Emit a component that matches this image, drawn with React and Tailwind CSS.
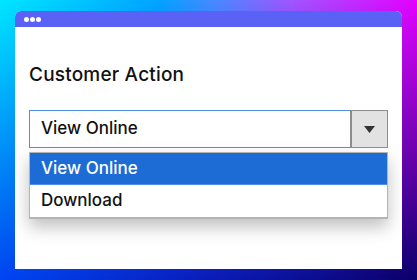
import React from 'react'

const font = { fontFamily: 'Inter, "Noto Sans", sans-serif' }

export default function App() {
  return (
    <div className="relative h-[280px] w-[417px] overflow-hidden bg-[linear-gradient(to_right,#0044f2,#0a1fc0_45%,#0b006a)]" style={font}>
      {/* top half of the backdrop colours */}
      <div className="absolute inset-0 bg-[linear-gradient(to_right,#00e6ff,#00a4ff_38%,#4a88ff_52%,#a055ff_70%,#e400ff)] [mask-image:linear-gradient(to_bottom,black_0%,rgba(0,0,0,0.55)_45%,transparent_100%)]" />

      <div className="relative px-[15px] pt-[11px]">
        <div className="flex h-[258px] flex-col bg-white rounded-t-[6px] overflow-hidden">
          {/* title bar */}
          <div className="flex h-[16px] items-center gap-[1px] bg-[#5a62f6] pl-[9px]">
            <span className="h-[5px] w-[5px] rounded-full bg-white" />
            <span className="h-[5px] w-[5px] rounded-full bg-white" />
            <span className="h-[5px] w-[5px] rounded-full bg-white" />
          </div>

          <div className="px-[14px] pt-[36px]">
            <h1 className="text-[19px] leading-[24px] font-medium text-[#111] tracking-[0.2px]">Customer Action</h1>

            {/* select */}
            <div className="mt-[23px] flex h-[38px]">
              <div className="flex flex-1 items-center border border-r-0 border-[#4a8fe3] pl-[11px] text-[17px] font-medium text-[#111]">
                View Online
              </div>
              <div className="flex w-[38px] items-center justify-center border border-l-2 border-[#8c8c8c] bg-[#e2e2e2]">
                <svg width="11" height="7" viewBox="0 0 11 7"><path d="M0 0h11L5.5 7z" fill="#333" /></svg>
              </div>
            </div>

            {/* options */}
            <div className="mt-[4px] border border-b-2 border-[#b4b4b4] shadow-[0_8px_16px_rgba(0,0,0,0.25)]">
              <div className="flex h-[32px] items-center border-b border-[#4f8fe8] bg-[#1d6bd5] pl-[11px] text-[17px] font-medium text-white">
                View Online
              </div>
              <div className="flex h-[32px] items-center bg-white pl-[11px] text-[17px] font-medium text-[#111]">
                Download
              </div>
            </div>
          </div>
        </div>
      </div>
    </div>
  )
}
